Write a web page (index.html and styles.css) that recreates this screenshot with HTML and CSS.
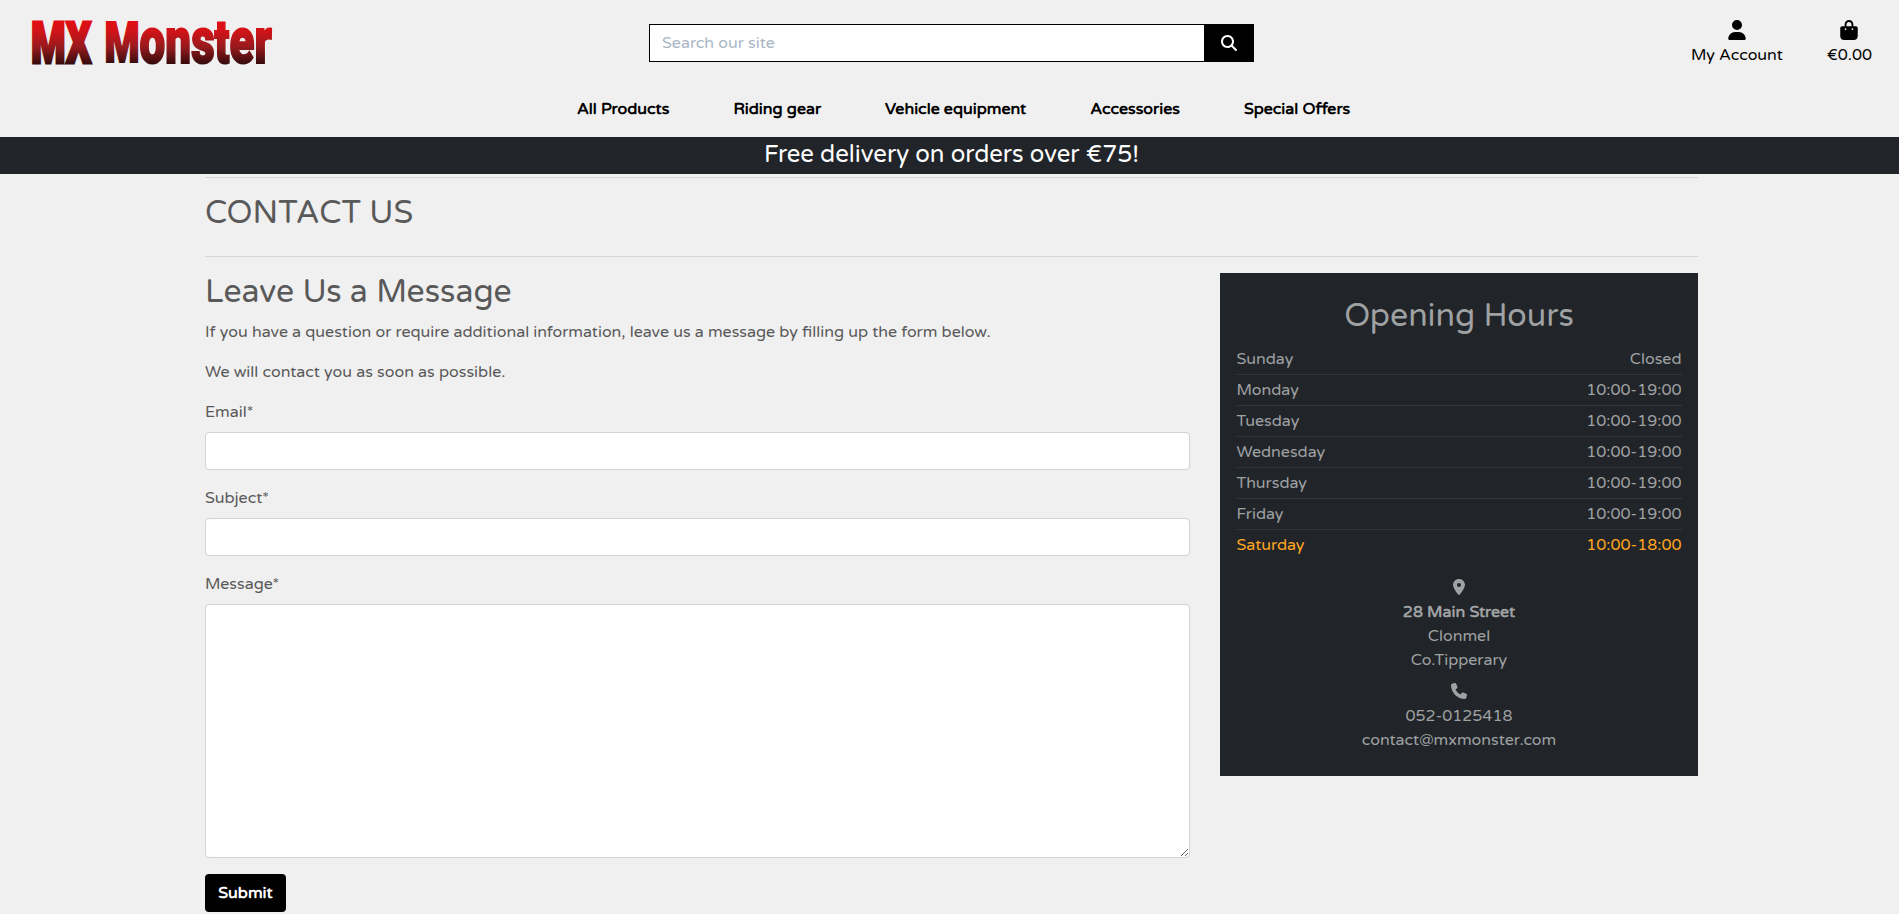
FILE: index.html
```html
<!DOCTYPE html>
<html lang="en">
<head>
<meta charset="utf-8">
<title>MX Monster - Contact Us</title>
<link rel="stylesheet" href="styles.css">
</head>
<body>
<header class="header">
  <div class="topbar">
    <a class="logo"><svg width="246" height="60" viewBox="0 0 246 60">
      <defs><linearGradient id="red" gradientUnits="userSpaceOnUse" x1="0" y1="12" x2="0" y2="57"><stop offset="0" stop-color="#e30d12"/><stop offset=".25" stop-color="#d01318"/><stop offset=".6" stop-color="#971a1d"/><stop offset="1" stop-color="#300a0a"/></linearGradient></defs>
      <g fill="url(#red)" stroke="url(#red)">
        <text class="logo-mx" transform="translate(5 0) scale(.68 1)" x="0" y="55">MX</text>
        <text class="logo-name" transform="translate(78.500 0) scale(.715 1)" x="0" y="54.500">M<tspan class="logo-lower">ons</tspan><tspan class="logo-t">t</tspan><tspan class="logo-lower">er</tspan></text>
      </g></svg></a>
    <form class="search">
      <input class="search-input" type="text" placeholder="Search our site">
      <button class="search-btn" type="button"><svg width="16" height="16" viewBox="0 0 512 512" fill="#fff"><path d="M416 208c0 45.900-14.900 88.300-40 122.700L502.600 457.400c12.500 12.500 12.500 32.800 0 45.300s-32.800 12.500-45.300 0L330.700 376c-34.400 25.200-76.800 40-122.700 40C93.100 416 0 322.900 0 208S93.100 0 208 0S416 93.100 416 208zM208 352a144 144 0 1 0 0-288 144 144 0 1 0 0 288z"/></svg></button>
    </form>
    <div class="tools">
      <a class="tool"><svg width="18" height="20" viewBox="0 0 448 512"><path d="M224 256A128 128 0 1 0 224 0a128 128 0 1 0 0 256zm-45.700 48C79.800 304 0 383.800 0 482.300C0 498.700 13.300 512 29.700 512H418.300c16.400 0 29.700-13.300 29.700-29.700C448 383.800 368.200 304 269.700 304H178.300z"/></svg><span class="t-account">My Account</span></a>
      <a class="tool"><svg width="18" height="20" viewBox="0 0 448 512"><path d="M160 112c0-35.300 28.700-64 64-64s64 28.700 64 64v48H160V112zm-48 48H48c-26.500 0-48 21.500-48 48V416c0 53 43 96 96 96H352c53 0 96-43 96-96V208c0-26.500-21.500-48-48-48H336V112C336 50.100 285.900 0 224 0S112 50.100 112 112v48zm24 48a24 24 0 1 1 0 48 24 24 0 1 1 0-48zm152 24a24 24 0 1 1 48 0 24 24 0 1 1 -48 0z"/></svg><span class="t-total">€0.00</span></a>
    </div>
  </div>
  <nav class="nav">
    <a>All Products</a><a>Riding gear</a><a>Vehicle equipment</a><a>Accessories</a><a>Special Offers</a>
  </nav>
</header>
<div class="banner"><span>Free delivery on orders over €75!</span></div>
<main class="page">
  <div class="title-block"><h2 class="heading">CONTACT US</h2></div>
  <div class="columns">
    <section class="message">
      <h2 class="heading">Leave Us a Message</h2>
      <p class="text">If you have a question or require additional information, leave us a message by filling up the form below.</p>
      <p class="text">We will contact you as soon as possible.</p>
      <form>
        <label class="label" for="email">Email*</label>
        <input class="field" id="email" type="text">
        <label class="label" for="subject">Subject*</label>
        <input class="field" id="subject" type="text">
        <label class="label" for="msg">Message*</label>
        <textarea class="field area" id="msg"></textarea>
        <button class="submit" type="button">Submit</button>
      </form>
    </section>
    <aside class="card">
      <h2 class="card-title">Opening Hours</h2>
      <ul class="hours">
        <li><span>Sunday</span><span>Closed</span></li>
        <li><span>Monday</span><span>10:00-19:00</span></li>
        <li><span>Tuesday</span><span>10:00-19:00</span></li>
        <li><span>Wednesday</span><span>10:00-19:00</span></li>
        <li><span>Thursday</span><span>10:00-19:00</span></li>
        <li><span>Friday</span><span>10:00-19:00</span></li>
        <li class="today"><span>Saturday</span><span>10:00-18:00</span></li>
      </ul>
      <div class="contact">
        <svg width="12" height="16" viewBox="0 0 384 512"><path d="M215.700 499.200C267 435 384 279.400 384 192C384 86 298 0 192 0S0 86 0 192c0 87.400 117 243 168.300 307.200c12.300 15.300 35.100 15.300 47.400 0zM192 128a64 64 0 1 1 0 128 64 64 0 1 1 0-128z"/></svg>
        <strong>28 Main Street</strong>
        <span>Clonmel</span>
        <span>Co.Tipperary</span>
        <svg class="phone" width="16" height="16" viewBox="0 0 512 512"><path d="M164.900 24.600c-7.700-18.600-28-28.500-47.400-23.200l-88 24C12.100 30.200 0 46 0 64C0 311.400 200.600 512 448 512c18 0 33.800-12.100 38.600-29.500l24-88c5.300-19.400-4.600-39.700-23.200-47.400l-96-40c-16.300-6.800-35.200-2.100-46.300 11.600L304.700 368C234.300 334.700 177.300 277.700 144 207.300L193.300 167c13.700-11.200 18.400-30 11.600-46.300l-40-96z"/></svg>
        <span>052-0125418</span>
        <span>contact@mxmonster.com</span>
      </div>
    </aside>
  </div>
</main>
</body>
</html>
```
FILE: styles.css
```css
* { box-sizing: border-box; }
body { margin: 0; background: #f0f0f0; color: #595959; font: 16px/24px "Varela Round", "Noto Sans", sans-serif; overflow: hidden; }
svg { display: block; overflow: visible; }
h2, p, ul { margin: 0; padding: 0; }
.header { height: 137px; color: #000; }
.topbar { display: grid; grid-template-columns: 649px 605px 1fr; height: 86px; }
.logo { padding: 8px 0 0 26px; }
.logo-mx { font: 900 58px Roboto, sans-serif; stroke-width: 3px; }
.logo-name { font: 900 56px Roboto, sans-serif; stroke-width: 2px; }
.logo-lower { font-size: 64px; }
.logo-t { font-size: 61px; }
.search { display: flex; height: 38px; margin-top: 24px; }
.search-input { flex: 1; min-width: 0; border: 1px solid #000; border-right: 0; padding: 0 12px; font: inherit; background: #fff; }
.search-input::placeholder { color: #aab7c4; opacity: 1; }
.search-btn { width: 50px; border: 0; padding: 0; background: #000; display: flex; align-items: center; justify-content: center; }
.tools { display: flex; justify-content: flex-end; gap: 44px; padding: 20px 27px 0 0; }
.tool { display: flex; flex-direction: column; align-items: center; }
.tool span { margin-top: 3px; }
.nav { display: flex; gap: 64px; padding: 11px 0 0 577px; font-weight: 700; }
.nav a { white-space: nowrap; }
.banner { height: 37px; background: #212529; color: #fff; font-size: 24px; line-height: 36px; text-align: center; padding-left: 4px; }
.page { margin: 3px 201px 0 205px; border-top: 1px solid #d6d6d6; }
.title-block { height: 79px; padding-top: 16px; border-bottom: 1px solid #d6d6d6; }
.heading { font-size: 32px; font-weight: 400; line-height: 38px; }
.columns { display: grid; grid-template-columns: 985px 478px; justify-content: space-between; align-items: start; padding-top: 16px; }
.message .heading { height: 47px; line-height: 39px; white-space: nowrap; }
.text { margin-bottom: 16px; white-space: nowrap; }
.label { display: block; margin-bottom: 8px; }
.field { display: block; width: 100%; height: 38px; border: 1px solid #ced4da; border-radius: 4px; background: #fff; margin: 0 0 16px; }
.area { height: 254px; resize: vertical; }
.submit { width: 81px; height: 38px; border: 0; border-radius: 4px; background: #000; color: #fff; font: inherit; font-weight: 700; padding: 0; }
.card { height: 503px; padding: 21px 16.5px 0; background: #212529; color: #9fa1a3; }
.card-title { font-size: 32px; font-weight: 400; line-height: 45px; text-align: center; height: 50px; }
.hours { list-style: none; }
.hours li { display: flex; justify-content: space-between; height: 31px; padding-top: 3px; border-bottom: 1px solid #33373b; }
.hours .today { color: #ffa51f; border: 0; }
.contact { display: flex; flex-direction: column; align-items: center; padding-top: 18px; }
.contact svg { fill: #9fa1a3; margin-bottom: 5px; }
.contact .phone { margin-top: 11px; }
```
